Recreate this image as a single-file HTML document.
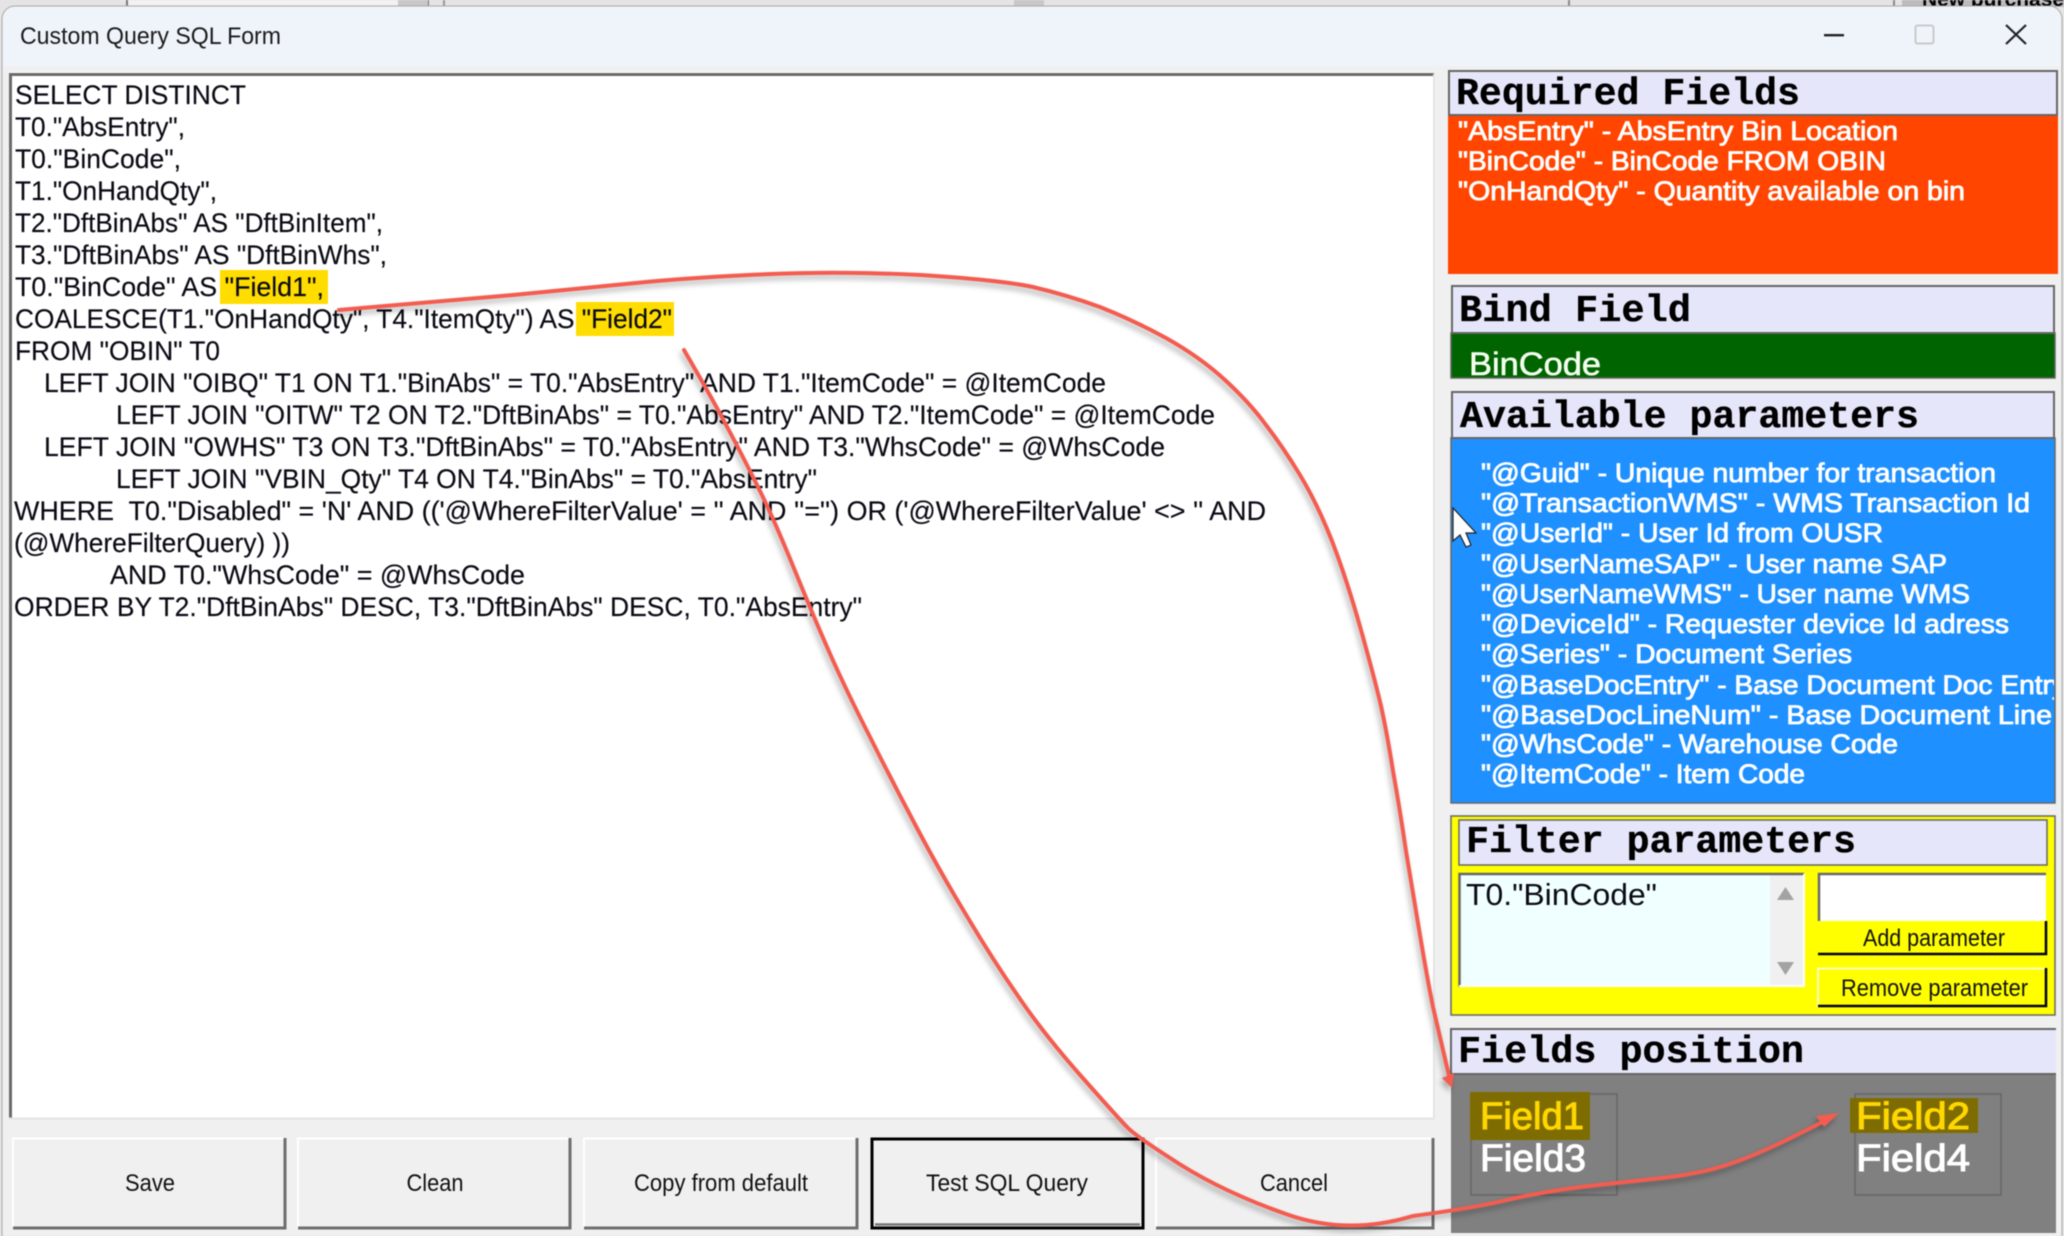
<!DOCTYPE html>
<html><head><meta charset="utf-8"><title>Custom Query SQL Form</title>
<style>
html,body{margin:0;padding:0;background:#e4e4e4;width:2064px;height:1236px;overflow:hidden}
svg{display:block;position:absolute;left:0;top:0;filter:blur(.5px)}
text{font-family:"Liberation Sans",sans-serif;white-space:pre}
.sql text{font-size:27px;fill:#0a0a14;stroke:#0a0a14;stroke-width:.15px}
.hd{font-family:"Liberation Mono",monospace;font-weight:bold;font-size:38px;fill:#000;stroke:#000;stroke-width:.3px}
.wt{font-size:26.5px;fill:#fff;stroke:#fff;stroke-width:.85px}
.btn{font-size:24px;fill:#111}
.fld{font-size:38px;stroke-width:1px}
</style></head><body>
<svg width="2064" height="1236" viewBox="0 0 2064 1236" xmlns="http://www.w3.org/2000/svg">
<defs>
<clipPath id="bl"><rect x="1451" y="438" width="603" height="365"/></clipPath>
<clipPath id="gr"><rect x="1451" y="333" width="604" height="44"/></clipPath>
<clipPath id="tp"><rect x="1900" y="0" width="164" height="6"/></clipPath>
</defs>
<!-- background strip behind window -->
<rect width="2064" height="1236" fill="#e4e4e4"/>
<rect x="127" y="0" width="301" height="6" fill="#f2f2f2"/>
<rect x="126" y="0" width="2" height="7" fill="#777"/>
<rect x="427" y="0" width="2" height="7" fill="#777"/>
<rect x="398" y="0" width="30" height="6" fill="#c8c8c8"/>
<rect x="443" y="0" width="2" height="7" fill="#999"/>
<rect x="1014" y="0" width="30" height="6" fill="#c8c8c8"/>
<rect x="1568" y="0" width="2" height="7" fill="#888"/>
<rect x="1893" y="0" width="2" height="7" fill="#888"/>
<rect x="1902" y="0" width="162" height="7" fill="#bcbcbc"/>
<text x="1922" y="6" font-size="20" font-weight="bold" clip-path="url(#tp)" textLength="142" lengthAdjust="spacingAndGlyphs">New purchase</text>
<!-- window -->
<rect x="2" y="6" width="2060" height="1240" rx="13" fill="#f0f0f0" stroke="#a8a8a8" stroke-width="1"/>
<path d="M3 66V19a12 12 0 0 1 12-12H2049a12 12 0 0 1 12 12V66Z" fill="#eff4fb"/>
<text x="20" y="44" font-size="24.500" fill="#1a1a1a" textLength="261" lengthAdjust="spacingAndGlyphs">Custom Query SQL Form</text>
<rect x="1824" y="34" width="20" height="2.400" fill="#222"/>
<rect x="1915.500" y="25.500" width="18" height="18" rx="2" fill="none" stroke="#c9c9c9" stroke-width="2"/>
<path d="M2006 25L2026 44M2026 25L2006 44" stroke="#222" stroke-width="2.200" fill="none"/>

<!-- SQL box -->
<rect x="9" y="72" width="1425" height="1047" fill="#fff"/>
<path d="M10.500 1118V74.500H1434" fill="none" stroke="#6a6a6a" stroke-width="3"/>
<path d="M9 1118.500H1434V74" fill="none" stroke="#e4e4e4" stroke-width="2"/>
<rect x="220" y="270" width="108" height="34" fill="#ffdd00"/>
<rect x="576" y="302" width="98" height="34" fill="#ffdd00"/>
<g class="sql">
<text x="15" y="104" textLength="231" lengthAdjust="spacingAndGlyphs">SELECT DISTINCT</text>
<text x="15" y="136" textLength="170" lengthAdjust="spacingAndGlyphs">T0."AbsEntry",</text>
<text x="15" y="168" textLength="166" lengthAdjust="spacingAndGlyphs">T0."BinCode",</text>
<text x="15" y="200" textLength="202" lengthAdjust="spacingAndGlyphs">T1."OnHandQty",</text>
<text x="15" y="232" textLength="368" lengthAdjust="spacingAndGlyphs">T2."DftBinAbs" AS "DftBinItem",</text>
<text x="15" y="264" textLength="372" lengthAdjust="spacingAndGlyphs">T3."DftBinAbs" AS "DftBinWhs",</text>
<text x="15" y="296" textLength="309" lengthAdjust="spacingAndGlyphs">T0."BinCode" AS "Field1",</text>
<text x="15" y="328" textLength="657" lengthAdjust="spacingAndGlyphs">COALESCE(T1."OnHandQty", T4."ItemQty") AS "Field2"</text>
<text x="15" y="360" textLength="205" lengthAdjust="spacingAndGlyphs">FROM "OBIN" T0</text>
<text x="44" y="392" textLength="1062" lengthAdjust="spacingAndGlyphs">LEFT JOIN "OIBQ" T1 ON T1."BinAbs" = T0."AbsEntry" AND T1."ItemCode" = @ItemCode</text>
<text x="116" y="424" textLength="1099" lengthAdjust="spacingAndGlyphs">LEFT JOIN "OITW" T2 ON T2."DftBinAbs" = T0."AbsEntry" AND T2."ItemCode" = @ItemCode</text>
<text x="44" y="456" textLength="1121" lengthAdjust="spacingAndGlyphs">LEFT JOIN "OWHS" T3 ON T3."DftBinAbs" = T0."AbsEntry" AND T3."WhsCode" = @WhsCode</text>
<text x="116" y="488" textLength="701" lengthAdjust="spacingAndGlyphs">LEFT JOIN "VBIN_Qty" T4 ON T4."BinAbs" = T0."AbsEntry"</text>
<text x="14" y="520" xml:space="preserve" textLength="1252" lengthAdjust="spacingAndGlyphs">WHERE  T0."Disabled" = 'N' AND (('@WhereFilterValue' = '' AND ''='') OR ('@WhereFilterValue' &lt;&gt; '' AND</text>
<text x="14" y="552" textLength="276" lengthAdjust="spacingAndGlyphs">(@WhereFilterQuery) ))</text>
<text x="110" y="584" textLength="415" lengthAdjust="spacingAndGlyphs">AND T0."WhsCode" = @WhsCode</text>
<text x="14" y="616" textLength="848" lengthAdjust="spacingAndGlyphs">ORDER BY T2."DftBinAbs" DESC, T3."DftBinAbs" DESC, T0."AbsEntry"</text>
</g>

<!-- Buttons -->
<g>
<rect x="13" y="1138" width="273" height="91" fill="#f0f0f0"/>
<path d="M13 1229V1138.500H285" fill="none" stroke="#fff" stroke-width="2"/><path d="M13 1228H285V1138" fill="none" stroke="#6e6e6e" stroke-width="3"/>
<rect x="298" y="1138" width="273" height="91" fill="#f0f0f0"/>
<path d="M298 1229V1138.500H570" fill="none" stroke="#fff" stroke-width="2"/><path d="M298 1228H570V1138" fill="none" stroke="#6e6e6e" stroke-width="3"/>
<rect x="584" y="1138" width="274" height="91" fill="#f0f0f0"/>
<path d="M584 1229V1138.500H857" fill="none" stroke="#fff" stroke-width="2"/><path d="M584 1228H857V1138" fill="none" stroke="#6e6e6e" stroke-width="3"/>
<rect x="872" y="1139" width="271" height="89" fill="#f0f0f0" stroke="#000" stroke-width="3"/>
<path d="M875 1224.500H1140" stroke="#777" stroke-width="2.500" fill="none"/>
<rect x="1156" y="1138" width="278" height="91" fill="#f0f0f0"/>
<path d="M1156 1229V1138.500H1433" fill="none" stroke="#fff" stroke-width="2"/><path d="M1156 1228H1433V1138" fill="none" stroke="#6e6e6e" stroke-width="3"/>
<text class="btn" x="125" y="1191" textLength="50" lengthAdjust="spacingAndGlyphs">Save</text>
<text class="btn" x="406.500" y="1191" textLength="57" lengthAdjust="spacingAndGlyphs">Clean</text>
<text class="btn" x="634" y="1191" textLength="174" lengthAdjust="spacingAndGlyphs">Copy from default</text>
<text class="btn" x="926" y="1191" textLength="162" lengthAdjust="spacingAndGlyphs">Test SQL Query</text>
<text class="btn" x="1260" y="1191" textLength="68" lengthAdjust="spacingAndGlyphs">Cancel</text>
</g>

<!-- Required Fields -->
<rect x="1448" y="115" width="610" height="159" fill="#ff4500"/>
<rect x="1449" y="71" width="608" height="44" fill="#e6e6fa" stroke="#666" stroke-width="2"/>
<text class="hd" x="1456" y="104" textLength="344" lengthAdjust="spacingAndGlyphs">Required Fields</text>
<text class="wt" x="1458" y="140" textLength="440" lengthAdjust="spacingAndGlyphs">"AbsEntry" - AbsEntry Bin Location</text>
<text class="wt" x="1458" y="170" textLength="428" lengthAdjust="spacingAndGlyphs">"BinCode" - BinCode FROM OBIN</text>
<text class="wt" x="1458" y="200" textLength="507" lengthAdjust="spacingAndGlyphs">"OnHandQty" - Quantity available on bin</text>

<!-- Bind Field -->
<rect x="1451" y="333" width="604" height="45" fill="#006400" stroke="#666" stroke-width="1.500"/>
<rect x="1452" y="286" width="602" height="47" fill="#e6e6fa" stroke="#666" stroke-width="2"/>
<text class="hd" x="1459" y="321" textLength="232" lengthAdjust="spacingAndGlyphs">Bind Field</text>
<g clip-path="url(#gr)"><text x="1469" y="375" font-size="32" fill="#f4fff0" stroke="#f4fff0" stroke-width=".6" textLength="132" lengthAdjust="spacingAndGlyphs">BinCode</text></g>

<!-- Available parameters -->
<rect x="1451" y="438" width="604" height="365" fill="#1e90ff" stroke="#666" stroke-width="1.500"/>
<rect x="1452" y="392" width="602" height="46" fill="#e6e6fa" stroke="#666" stroke-width="2"/>
<text class="hd" x="1460" y="427" textLength="459" lengthAdjust="spacingAndGlyphs">Available parameters</text>
<g clip-path="url(#bl)">
<text class="wt" x="1481" y="482" textLength="515" lengthAdjust="spacingAndGlyphs">"@Guid" - Unique number for transaction</text>
<text class="wt" x="1481" y="512" textLength="549" lengthAdjust="spacingAndGlyphs">"@TransactionWMS" - WMS Transaction Id</text>
<text class="wt" x="1481" y="542" textLength="402" lengthAdjust="spacingAndGlyphs">"@UserId" - User Id from OUSR</text>
<text class="wt" x="1481" y="573" textLength="466" lengthAdjust="spacingAndGlyphs">"@UserNameSAP" - User name SAP</text>
<text class="wt" x="1481" y="603" textLength="489" lengthAdjust="spacingAndGlyphs">"@UserNameWMS" - User name WMS</text>
<text class="wt" x="1481" y="633" textLength="528" lengthAdjust="spacingAndGlyphs">"@DeviceId" - Requester device Id adress</text>
<text class="wt" x="1481" y="663" textLength="371" lengthAdjust="spacingAndGlyphs">"@Series" - Document Series</text>
<text class="wt" x="1481" y="694" textLength="585" lengthAdjust="spacingAndGlyphs">"@BaseDocEntry" - Base Document Doc Entry</text>
<text class="wt" x="1481" y="724" textLength="571" lengthAdjust="spacingAndGlyphs">"@BaseDocLineNum" - Base Document Line</text>
<text class="wt" x="1481" y="753" textLength="417" lengthAdjust="spacingAndGlyphs">"@WhsCode" - Warehouse Code</text>
<text class="wt" x="1481" y="783" textLength="324" lengthAdjust="spacingAndGlyphs">"@ItemCode" - Item Code</text>
</g>

<!-- Filter parameters -->
<rect x="1451" y="816" width="604" height="199" fill="#ffff00" stroke="#666" stroke-width="1.500"/>
<rect x="1459" y="820" width="588" height="45" fill="#e6e6fa" stroke="#666" stroke-width="1.500"/>
<text class="hd" x="1466" y="852" textLength="390" lengthAdjust="spacingAndGlyphs">Filter parameters</text>
<rect x="1459" y="873" width="345" height="114" fill="#f0ffff"/>
<rect x="1770" y="875" width="33" height="110" fill="#f0f0f0"/>
<path d="M1459.500 987V874H1804" fill="none" stroke="#666" stroke-width="2.500"/>
<path d="M1459 986H1804V874" fill="none" stroke="#fff" stroke-width="2"/>
<path d="M1785.500 887L1794 900H1777Z M1777 962H1794L1785.500 975Z" fill="#a3a3a3"/>
<text x="1466" y="905" font-size="31" fill="#0a0a14" textLength="191" lengthAdjust="spacingAndGlyphs">T0."BinCode"</text>
<rect x="1818" y="873" width="228" height="48" fill="#fff"/>
<path d="M1819 921V874H2046" fill="none" stroke="#6a6a6a" stroke-width="2.500"/>
<rect x="1818" y="921" width="229" height="34" fill="#ffff00"/>
<path d="M1818 954H2046V921" fill="none" stroke="#000" stroke-width="2.500"/>
<text x="1863" y="946" font-size="24" fill="#111" textLength="142" lengthAdjust="spacingAndGlyphs">Add parameter</text>
<rect x="1818" y="968" width="229" height="39" fill="#ffff00"/>
<path d="M1818 1007V968.500H2046" fill="none" stroke="#fff" stroke-width="1.500"/>
<path d="M1818 1006H2046V968" fill="none" stroke="#000" stroke-width="2.500"/>
<text x="1841" y="996" font-size="24" fill="#111" textLength="187" lengthAdjust="spacingAndGlyphs">Remove parameter</text>

<!-- Fields position -->
<rect x="1451" y="1074" width="605" height="159" fill="#808080"/>
<rect x="1451" y="1029" width="605" height="45" fill="#e6e6fa"/>
<path d="M1451 1074V1029H2056M1451 1074H2056" fill="none" stroke="#666" stroke-width="2"/>
<text class="hd" x="1458" y="1062" textLength="346" lengthAdjust="spacingAndGlyphs">Fields position</text>
<rect x="1471" y="1094" width="146" height="101" fill="none" stroke="#6b6b6b" stroke-width="2"/>
<rect x="1855" y="1094" width="146" height="101" fill="none" stroke="#6b6b6b" stroke-width="2"/>
<rect x="1470" y="1092" width="120" height="48" fill="#7f6c00"/>
<rect x="1850" y="1098" width="128" height="35" fill="#7f6c00"/>
<text class="fld" x="1480" y="1129" fill="#ffd700" stroke="#ffd700" textLength="104" lengthAdjust="spacingAndGlyphs">Field1</text>
<text class="fld" x="1480" y="1171" fill="#fff" stroke="#fff" textLength="106" lengthAdjust="spacingAndGlyphs">Field3</text>
<text class="fld" x="1856" y="1129" fill="#ffd700" stroke="#ffd700" textLength="114" lengthAdjust="spacingAndGlyphs">Field2</text>
<text class="fld" x="1856" y="1171" fill="#fff" stroke="#fff" textLength="114" lengthAdjust="spacingAndGlyphs">Field4</text>

<!-- Arrows -->
<g fill="none" stroke="#f45c50" stroke-width="4" stroke-linecap="round" style="filter:drop-shadow(-2px 4px 3px rgba(0,0,0,.3))">
<path d="M339 310L513 295Q592 287 646 282Q700 277 771 274Q842 271 921 275Q1000 280 1033 287Q1067 295 1100 307Q1133 320 1166 338Q1200 357 1225 380Q1250 403 1266 425Q1283 447 1300 475Q1317 503 1332 541Q1347 580 1361 630Q1375 680 1381 706Q1387 733 1393 771Q1400 810 1406 851Q1413 893 1420 935Q1427 977 1433 1007Q1440 1037 1450 1080"/>
<path d="M684 350Q713 400 725 423Q738 447 754 479Q771 512 793 566Q815 620 831 656Q847 692 870 737Q893 783 918 830Q943 877 968 918Q993 960 1018 996Q1043 1033 1081 1076Q1120 1120 1128 1128Q1137 1137 1181 1165Q1226 1193 1286 1214Q1347 1236 1413 1216Q1480 1207 1511 1199Q1543 1192 1580 1187Q1617 1183 1662 1178Q1707 1173 1738 1161Q1769 1150 1832 1117"/>
<path d="M1452 1088L1442 1078L1454 1073Z M1839 1113L1816 1116L1824 1127Z" fill="#f45c50" stroke="none"/>
</g>

<!-- Cursor -->
<path d="M1453 508V541L1460 535L1466 547L1471 545L1466 533L1476 533Z" fill="#fff" stroke="#222" stroke-width="1.200"/>
</svg>
</body></html>
